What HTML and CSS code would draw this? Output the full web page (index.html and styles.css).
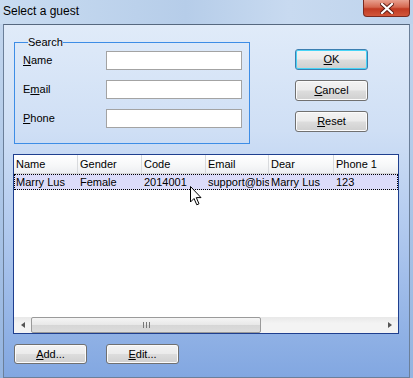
FILE: index.html
```html
<!DOCTYPE html>
<html lang="en">
<head>
    <meta charset="UTF-8">
    <title>Select a guest</title>
    <link rel="stylesheet" href="styles.css">
</head>
<body>
    <div class="window">
        <div class="titlebar">
            <span class="title">Select a guest</span>
            <span class="close">
                <svg width="14" height="11" viewBox="0 0 14 11">
                    <path d="M2 1 L12 10 M12 1 L2 10" stroke="#5a1a12" stroke-width="4" stroke-linecap="square"/>
                    <path d="M2 1 L12 10 M12 1 L2 10" stroke="#fff" stroke-width="2.2" stroke-linecap="square"/>
                </svg>
            </span>
        </div>

        <div class="client">
            <div class="top">
                <fieldset class="search">
                    <legend>Search</legend>
                    <div class="field">
                        <label for="name"><u>N</u>ame</label>
                        <input type="text" id="name">
                    </div>
                    <div class="field">
                        <label for="email">E<u>m</u>ail</label>
                        <input type="text" id="email">
                    </div>
                    <div class="field">
                        <label for="phone"><u>P</u>hone</label>
                        <input type="text" id="phone">
                    </div>
                </fieldset>

                <div class="actions">
                    <button class="btn default"><u>O</u>K</button>
                    <button class="btn"><u>C</u>ancel</button>
                    <button class="btn"><u>R</u>eset</button>
                </div>
            </div>

            <div class="listview">
                <div class="lv-header">
                    <span>Name</span>
                    <span>Gender</span>
                    <span>Code</span>
                    <span>Email</span>
                    <span>Dear</span>
                    <span>Phone 1</span>
                </div>
                <div class="lv-row selected">
                    <span>Marry Lus</span>
                    <span>Female</span>
                    <span>2014001</span>
                    <span>support@bis</span>
                    <span>Marry Lus</span>
                    <span>123</span>
                </div>
                <div class="lv-body"></div>
                <div class="hscroll">
                    <span class="arrow left"></span>
                    <div class="track">
                        <div class="thumb"><span class="grip"></span></div>
                    </div>
                    <span class="arrow right"></span>
                </div>
            </div>

            <div class="bottom">
                <button class="btn"><u>A</u>dd...</button>
                <button class="btn"><u>E</u>dit...</button>
            </div>
        </div>

        <!-- mouse pointer over the list -->
        <svg class="cursor" width="13" height="20" viewBox="0 0 13 20">
            <path d="M0.5 0.5 L0.5 16 L4 12.5 L6.8 18.8 L9 17.8 L6.3 11.6 L11 11.6 Z" fill="#fff" stroke="#000" stroke-width="1"/>
        </svg>
    </div>
</body>
</html>
```

FILE: styles.css
```css
body {
 margin: 0;
 font-family: "Liberation Sans", Arial, sans-serif;
 font-size: 11px;
 color: #000;
}

.window {
 position: relative;
 width: 413px;
 height: 378px;
 background: linear-gradient(to bottom, #c4d7ee 0%, #b3cbe9 40%, #94b4e0 100%);
 display: flex;
 flex-direction: column;
 overflow: hidden;
}

/* title bar */
.titlebar {
 height: 24px;
 display: flex;
 justify-content: space-between;
 align-items: flex-start;
 padding-left: 3px;
 background: linear-gradient(to right, #c9dcf1 0%, #b6cde9 45%, #c8daf0 70%, #bed3ec 100%);
}

.title {
 font-size: 12px;
 margin-top: 4px;
}

.close {
 width: 45px;
 height: 16px;
 margin-right: 3px;
 border: 1px solid #7a2a20;
 border-top: none;
 border-radius: 0 0 4px 4px;
 background: linear-gradient(to bottom, #e8a08f 0%, #d5674f 45%, #c13a22 55%, #d2563a 100%);
 display: flex;
 justify-content: center;
 align-items: center;
}

/* client area */
.client {
 margin: 0 3px 0 3px;
 height: 348px;
 border: 1px solid #6b7f99;
 border-top-color: #56687f;
 background: linear-gradient(to bottom, #e0ebf9 0%, #cfdff5 30%, #afc8ee 60%, #82a7e1 100%);
 padding: 11px 10px 0 9px;
}

.top {
 display: flex;
 align-items: flex-start;
}

.search {
 margin: 0 0 0 1px;
 padding: 2px 7px 15px 8px;
 border: 1px solid #3d8de6;
 box-sizing: border-box;
 width: 236px;
}

.search legend {
 padding: 0;
 margin-left: 5px;
 line-height: 13px;
}

.field {
 display: flex;
 align-items: center;
 height: 19px;
 margin-bottom: 10px;
}

.field:last-child {
 margin-bottom: 0;
}

.field label {
 width: 83px;
}

.field input {
 width: 136px;
 height: 19px;
 box-sizing: border-box;
 border: 1px solid #a3a3a3;
 background: #fff;
 margin: 0;
}

.actions {
 display: flex;
 flex-direction: column;
 gap: 10px;
 margin-left: 45px;
 margin-top: 13px;
}

.btn {
 width: 73px;
 height: 21px;
 padding: 0;
 font-family: inherit;
 font-size: 11px;
 color: #000;
 border: 1px solid #707070;
 border-radius: 3px;
 background: linear-gradient(to bottom, #f3f3f3 0%, #ebebeb 48%, #dddddd 52%, #cfcfcf 100%);
 box-shadow: inset 0 0 0 1px #fbfbfb;
}

.btn.default {
 border-color: #3c7fb1;
 box-shadow: inset 0 0 0 1px #48d4f6;
}

/* list view */
.listview {
 margin-top: 10px;
 width: 386px;
 height: 180px;
 box-sizing: border-box;
 border: 1px solid #1f3f8e;
 background: #fff;
 display: flex;
 flex-direction: column;
}

.lv-header,
.lv-row {
 display: grid;
 grid-template-columns: 64px 64px 64px 63px 65px 1fr;
}

.lv-header {
 height: 19px;
 background: linear-gradient(to bottom, #ffffff 0%, #f6f7f8 60%, #eceef1 100%);
 border-bottom: 1px solid #d5d5d5;
 box-sizing: border-box;
}

.lv-header span {
 border-right: 1px solid #d8dadd;
 padding-left: 2px;
 line-height: 18px;
 white-space: nowrap;
 overflow: hidden;
}

.lv-header span:last-child {
 border-right: none;
}

.lv-row {
 height: 16px;
 line-height: 16px;
}

.lv-row span {
 padding-left: 2px;
 white-space: nowrap;
 overflow: hidden;
}

.lv-row.selected {
 background: #dcdcf9;
 outline: 1px dotted #000;
 outline-offset: -1px;
}

.lv-body {
 flex: 1;
}

.hscroll {
 height: 16px;
 display: flex;
 background: linear-gradient(to bottom, #e8e8e8 0%, #f3f3f3 40%, #f3f3f3 100%);
}

.hscroll .arrow {
 width: 17px;
 display: flex;
 align-items: center;
 justify-content: center;
}

.hscroll .arrow::before {
 content: "";
 border-top: 3px solid transparent;
 border-bottom: 3px solid transparent;
}

.hscroll .arrow.left::before {
 border-right: 4px solid #555;
}

.hscroll .arrow.right::before {
 border-left: 4px solid #555;
}

.track {
 flex: 1;
 display: flex;
}

.thumb {
 width: 230px;
 box-sizing: border-box;
 border: 1px solid #9a9a9a;
 border-radius: 2px;
 background: linear-gradient(to bottom, #f5f5f5 0%, #e8e8e8 50%, #d6d6d6 51%, #dcdcdc 100%);
 display: flex;
 align-items: center;
 justify-content: center;
}

.grip {
 width: 7px;
 height: 6px;
 background: repeating-linear-gradient(to right, #777 0 1px, transparent 1px 3px);
}

/* bottom buttons */
.bottom {
 display: flex;
 gap: 19px;
 margin-top: 10px;
 margin-left: 1px;
}

.bottom .btn {
 height: 20px;
}

.cursor {
 position: absolute;
 left: 190px;
 top: 186px;
}
```
